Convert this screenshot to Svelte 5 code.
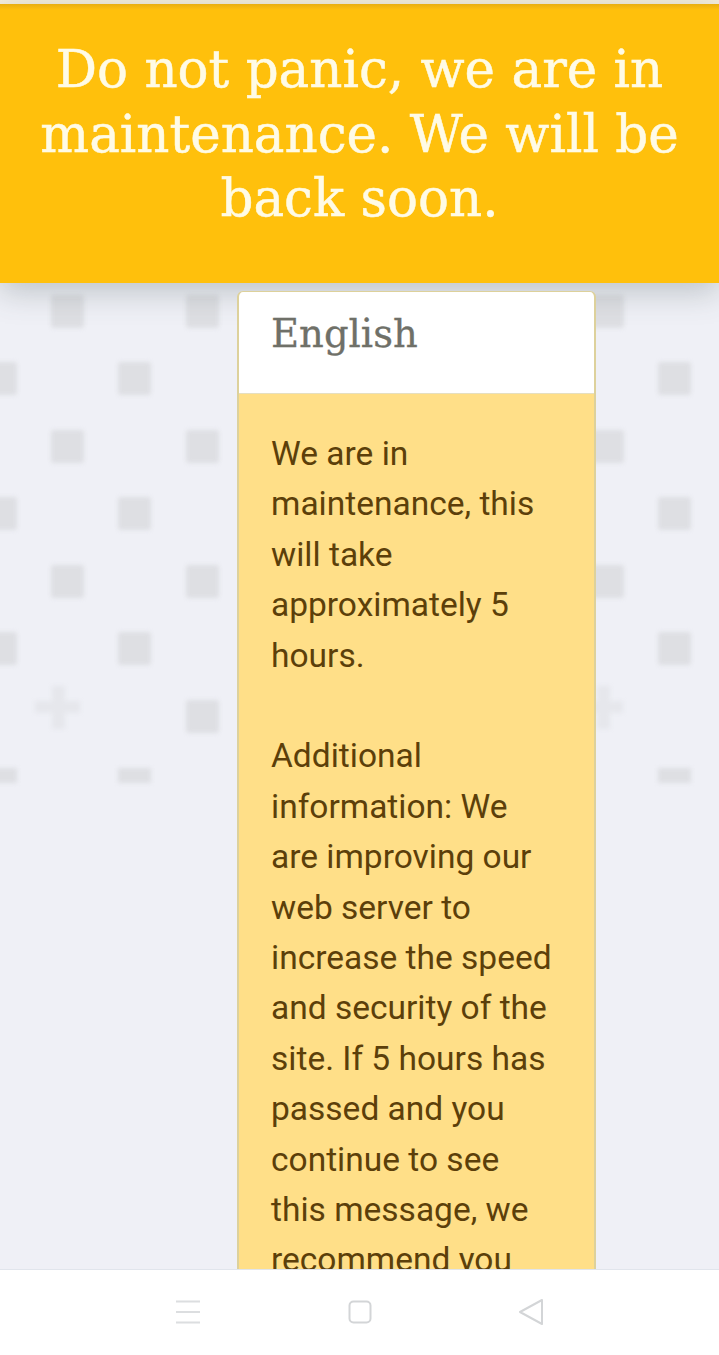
<script>
  // background tiles: two staggered columns sets, 135px apart
  const size = 33;
  const upper = [12, 147, 282];
  const lower = [79, 214, 349];
  const upperX = [51, 186, 591];
  const lowerX = [-16, 118, 658];

  const tiles = [];
  for (const y of upper) for (const x of upperX) tiles.push({ x, y });
  for (const y of lower) for (const x of lowerX) tiles.push({ x, y });
  tiles.push({ x: 186, y: 417 });
</script>

<div class="page">
  <div class="topline"></div>
  <header class="banner">
    <h1>Do not panic, we are in maintenance. We will be back soon.</h1>
  </header>

  <main class="content">
    <svg class="pattern" width="759" height="520" viewBox="-20 0 759 520" aria-hidden="true">
      <g fill="#dedfe3">
        {#each tiles as t}
          <rect x={t.x} y={t.y} width={size} height={size} rx="3" />
        {/each}
        {#each [-16, 118, 658] as x}
          <rect {x} y="485" width={size} height="15" />
        {/each}
        <path class="plus" d="M35 418h17v-15h13v15h15v12h-15v16h-13v-16h-17z" />
        <path class="plus" d="M590 418h7v-15h13v15h13v12h-13v16h-13v-16h-7z" />
      </g>
    </svg>

    <section class="card">
      <div class="card-head">English</div>
      <div class="card-body">
        <p>We are in maintenance, this will take approximately 5 hours.</p>
        <p>Additional information: We are improving our web server to increase the speed and security of the site. If 5 hours has passed and you continue to see this message, we recommend you</p>
      </div>
    </section>
  </main>

  <nav class="navbar">
    <svg width="24" height="26" viewBox="0 0 24 26" fill="none" stroke="#dcdee0" stroke-width="2">
      <path d="M0 2.500h24M0 13h24M0 23.500h24" />
    </svg>
    <svg class="home" width="24" height="24" viewBox="0 0 24 24" fill="none" stroke="#d3d5d7" stroke-width="2">
      <rect x="1.500" y="1.500" width="21" height="21" rx="4" />
    </svg>
    <svg width="26" height="28" viewBox="0 0 26 28" fill="none" stroke="#d3d5d7" stroke-width="2" stroke-linejoin="round">
      <path d="M24 2 2 14l22 12z" />
    </svg>
  </nav>
</div>

<style>
  :global(body) {
    margin: 0;
    background: #eff0f6;
  }

  .page {
    width: 719px;
    height: 1355px;
    display: flex;
    flex-direction: column;
    overflow: hidden;
  }

  .topline {
    height: 4px;
    flex: none;
    background: #f6efdc;
  }

  .banner {
    position: relative;
    z-index: 2;
    height: 279px;
    flex: none;
    padding: 33px 20px 0;
    box-sizing: border-box;
    background: linear-gradient(#e8ae10, #ffc00c 6px);
    box-shadow: 0 8px 30px rgba(70, 85, 85, 0.3);
  }

  h1 {
    margin: 0;
    font: 400 51.500px/64.500px "DejaVu Serif", serif;
    -webkit-text-stroke: 0.5px #fffbe6;
    color: #fffbe6;
    text-align: center;
  }

  .content {
    position: relative;
    flex: 1;
    min-height: 0;
    overflow: hidden;
    padding: 8px 0 0 237px;
    background: #eff0f6;
  }

  .pattern {
    position: absolute;
    left: -20px;
    top: 0;
    filter: blur(2px);
  }

  .plus {
    fill: #e6e7ec;
  }

  .card {
    position: relative;
    z-index: 3;
    width: 359px;
    box-sizing: border-box;
    border: 2px solid #ddd19b;
    border-top-width: 1px;
    border-radius: 6px;
    background: #fff;
  }

  .card-head {
    height: 102px;
    box-sizing: border-box;
    padding: 14px 0 0 32px;
    font: 400 38.500px/56px "DejaVu Serif", serif;
    -webkit-text-stroke: 0.3px #6f7068;
    color: #6f7068;
    border-bottom: 1px solid #e6dfc0;
  }

  .card-body {
    padding: 35px 34px 0 32px;
    background: #ffdf88;
    font: 400 33.500px/50.400px Roboto, sans-serif;
    color: #5c3f0a;
  }

  p {
    margin: 0 0 50.400px;
  }

  .navbar {
    position: relative;
    z-index: 4;
    height: 86px;
    flex: none;
    box-sizing: border-box;
    border-top: 1px solid #e1e5ec;
    background: #fff;
    display: flex;
    align-items: center;
    padding: 0 175px 2px 176px;
    justify-content: space-between;
  }

  .home {
    margin-left: 2px;
  }
</style>
